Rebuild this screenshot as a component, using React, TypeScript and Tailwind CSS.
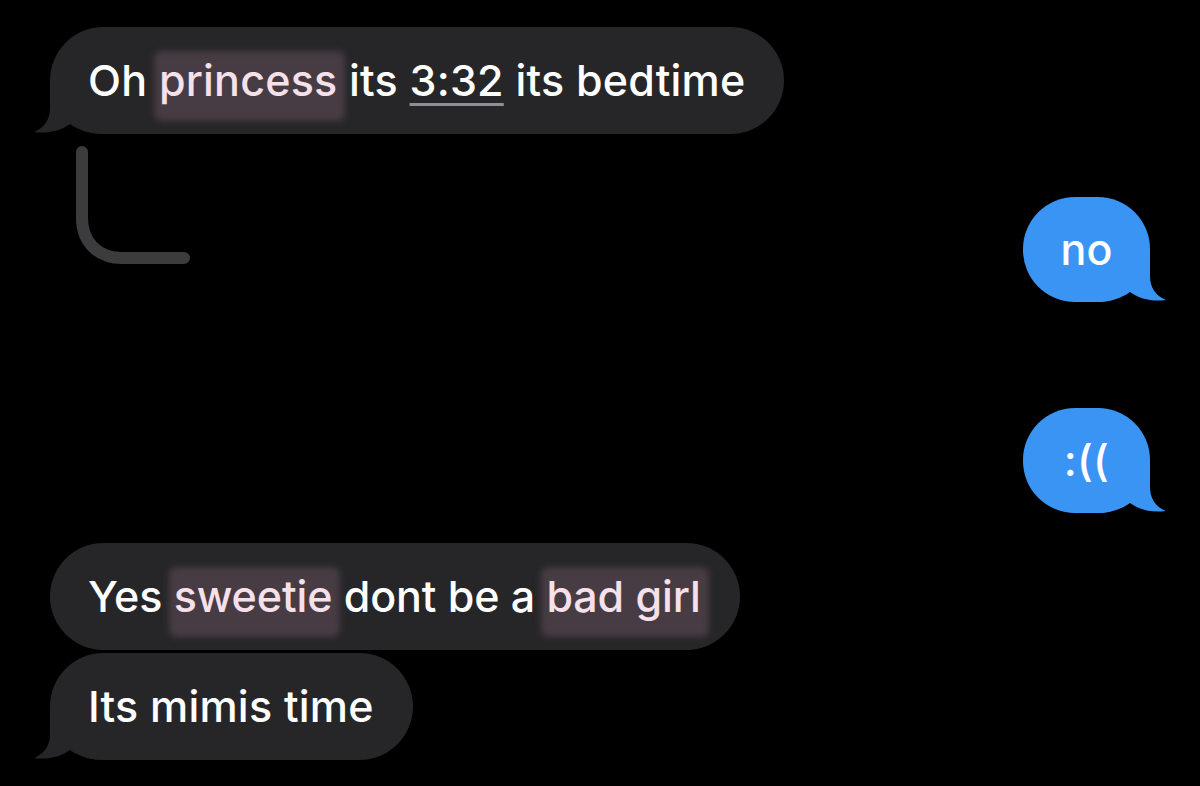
import React from 'react';

const GRAY = '#262628';

const LeftTail = () => (
    <svg className="absolute left-[-17px] bottom-0" width="70" height="60" viewBox="0 0 70 60">
        <path
            d="M17 6 L17 34 C17 46 11 54 1 58 C15 60 27 57 37 50 C45 56 57 60 70 60 L70 6 Z"
            fill={GRAY}
        />
    </svg>
);

const RightTail = () => (
    <svg className="absolute right-[-17px] bottom-0 -scale-x-100" width="70" height="60" viewBox="0 0 70 60">
        <path
            d="M17 6 L17 34 C17 46 11 54 1 58 C15 60 27 57 37 50 C45 56 57 60 70 60 L70 6 Z"
            fill="#3a94f3"
        />
    </svg>
);

// blurred highlighter mark behind a word
const Mark = ({ children }: { children: React.ReactNode }) => (
    <span className="relative inline-block text-[#f6e0ea]">
        <span className="absolute left-[-5px] right-[-8px] top-[3px] bottom-[-8px] rounded-lg bg-[#483c44] blur-[3px]" />
        <span className="relative">{children}</span>
    </span>
);

const GrayBubble = ({ children, tail }: { children: React.ReactNode; tail?: boolean }) => (
    <div className="relative self-start">
        {tail && <LeftTail />}
        <div className="relative h-[107px] rounded-full bg-[#262628] pl-[38px] pr-[39px] flex items-center text-white whitespace-nowrap">
            {children}
        </div>
    </div>
);

const BlueBubble = ({ children }: { children: React.ReactNode }) => (
    <div className="relative">
        <RightTail />
        <div className="relative w-[127px] h-[105px] rounded-[52px] bg-[#3a94f3] flex items-center justify-center text-white">
            {children}
        </div>
    </div>
);

export default function App() {
    return (
        <div
            className="w-[1200px] h-[786px] bg-black overflow-hidden flex flex-col pl-[50px] pr-[50px] pt-[27px] text-[43px] font-medium tracking-[0.2px]"
            style={{ fontFamily: 'Inter, "Liberation Sans", Arial, sans-serif' }}
        >
            <GrayBubble tail>
                <span>
                    Oh <Mark>princess</Mark> its{' '}
                    <span className="underline decoration-[#8e8e93] decoration-[3px] underline-offset-[7px]">3:32</span>{' '}
                    its bedtime
                </span>
            </GrayBubble>

            {/* reply thread line + outgoing bubbles */}
            <div className="flex justify-between mt-[12px]">
                <svg className="ml-[20px]" width="126" height="118" viewBox="0 0 126 118">
                    <path
                        d="M12 6 L12 72 C12 96 28 112 52 112 L114 112"
                        fill="none"
                        stroke="#3c3c3e"
                        strokeWidth="12"
                        strokeLinecap="round"
                    />
                </svg>
                <div className="flex flex-col pt-[51px]">
                    <BlueBubble>no</BlueBubble>
                    <div className="mt-[106px]">
                        <BlueBubble>:((</BlueBubble>
                    </div>
                </div>
            </div>

            <div className="mt-[30px] flex flex-col gap-[3px]">
                <GrayBubble>
                    <span className="tracking-[-0.1px]">
                        Yes <Mark>sweetie</Mark> dont be a <Mark>bad girl</Mark>
                    </span>
                </GrayBubble>
                <GrayBubble tail>
                    <span>Its mimis time</span>
                </GrayBubble>
            </div>
        </div>
    );
}
